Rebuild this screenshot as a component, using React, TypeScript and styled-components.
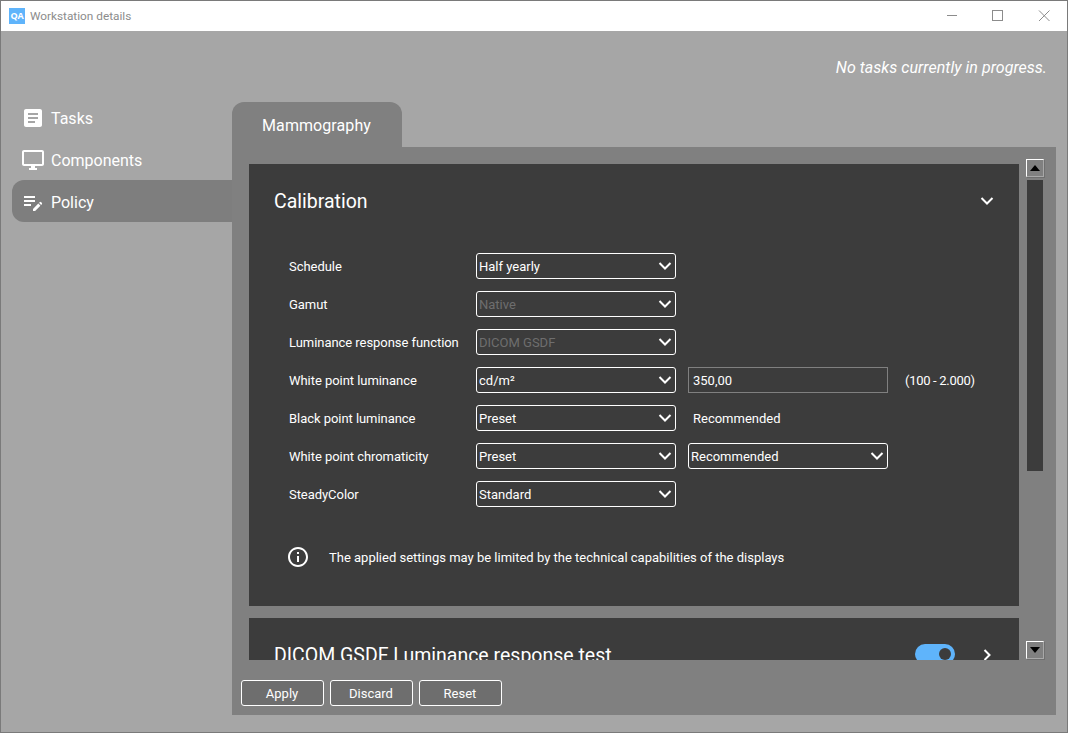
import React from "react";
import styled, { createGlobalStyle } from "styled-components";
import { MdArticle, MdOutlineDesktopWindows, MdEditNote, MdInfoOutline } from "react-icons/md";

const Global = createGlobalStyle`
  html, body { margin: 0; padding: 0; background: #a6a6a6; }
  * { box-sizing: border-box; }
`;

const Win = styled.div`
  width: 1068px; height: 733px; border: 1px solid #7a7a7a;
  display: flex; flex-direction: column; overflow: hidden;
  background: #a6a6a6; font-family: Roboto, sans-serif; color: #fff;
`;
const TitleBar = styled.div`
  height: 30px; flex: none; background: #fff; display: flex; align-items: center; padding-left: 8px;
`;
const AppIcon = styled.div`
  width: 16px; height: 16px; background: #5fb4fb; color: #fff; font: 700 9px/16px "Open Sans", sans-serif;
  text-align: center; letter-spacing: -0.2px;
`;
const AppTitle = styled.div`
  margin-left: 5px; font: 11.8px Roboto, sans-serif; color: #8c8c8c; flex: 1;
`;
const WinCtrl = styled.svg`
  width: 46px; height: 30px; flex: none; display: block;
`;
const Status = styled.div`
  height: 65px; flex: none; text-align: right; padding: 27px 20px 0 0;
  font-size: 16px; line-height: 19px; font-style: italic; letter-spacing: 0.03px;
`;
const Main = styled.div`
  flex: 1; display: flex; min-height: 0; padding-bottom: 17px;
`;
const Sidebar = styled.nav`
  width: 231px; flex: none; padding-left: 11px;
`;
const NavItem = styled.div<{ $active?: boolean }>`
  height: 42px; display: flex; align-items: center; padding: 2px 0 0 9px; gap: 6px;
  font-size: 16px; border-radius: 12px 0 0 12px;
  background: ${(p) => (p.$active ? "#7e7e7e" : "transparent")};
  svg { display: block; flex: none; }
`;
const Content = styled.div`
  width: 824px; flex: none; display: flex; flex-direction: column; padding-top: 6px;
`;
const Tab = styled.div`
  width: 170px; height: 45px; flex: none; background: #808080; border-radius: 12px 12px 0 0;
  display: flex; align-items: center; justify-content: center; font-size: 16px; padding-top: 2px;
  letter-spacing: 0.08px; padding-right: 1px;
`;
const Panel = styled.div`
  flex: 1; background: #808080; display: flex; flex-direction: column; min-height: 0;
`;
const ScrollRow = styled.div`
  height: 513px; flex: none; display: flex; overflow: hidden; padding: 17px 0 0 17px;
`;
const Cards = styled.div`
  width: 770px; flex: none; display: flex; flex-direction: column; gap: 12px;
`;
const Card = styled.section<{ $height: number }>`
  height: ${(p) => p.$height}px; flex: none; background: #3c3c3c; padding: 0 25px;
`;
const CardHead = styled.div`
  height: 74px; display: flex; align-items: center; font-size: 19.5px;
`;
const CardTitle = styled.div` flex: 1; `;
const Chevron = styled.svg`
  width: 14px; height: 14px; display: block; flex: none;
`;
const Toggle = styled.div`
  width: 40px; height: 20px; border-radius: 10px; background: #5fb4fb; margin: 0 25px 2px 0; padding: 4px 4px 4px 24px;
  &::after { content: ""; display: block; width: 12px; height: 12px; border-radius: 50%; background: #3c3c3c; }
`;
const Form = styled.div`
  display: grid; grid-template-columns: 187px 200px 212px auto; row-gap: 12px;
  padding: 15px 0 0 15px; font-size: 13px; align-items: center;
  grid-auto-rows: 26px;
`;
const Label = styled.div` grid-column: 1; letter-spacing: -0.05px; `;
const Sel = styled.div<{ $disabled?: boolean; $col2?: boolean }>`
  height: 26px; width: 200px; border: 1px solid #fff; border-radius: 3px; display: flex; align-items: center;
  padding: 0 3px 0 2px; justify-content: space-between;
  color: ${(p) => (p.$disabled ? "#6e6e6e" : "#fff")};
  margin-left: ${(p) => (p.$col2 ? "12px" : "0")};
  svg { display: block; }
`;
const Input = styled.div`
  height: 26px; width: 200px; margin-left: 12px; border: 1px solid #808080; display: flex; align-items: center; padding-left: 4px;
`;
const PlainValue = styled.div` margin-left: 17px; `;
const Range = styled.div` margin-left: 17px; white-space: nowrap; letter-spacing: -0.3px; `;
const Note = styled.div`
  display: flex; align-items: center; margin: 38px 0 0 12px; font-size: 13px; height: 24px;
  svg { display: block; flex: none; margin-right: 19px; }
`;
const ScrollBar = styled.div`
  width: 18px; flex: none; margin: -5px 0 0 7px; display: flex; flex-direction: column; align-items: center; height: 500px;
`;
const ScrollBtn = styled.div`
  width: 18px; height: 18px; flex: none; background: #808080; border: 1px solid; border-color: #fff #a8a8a8 #a8a8a8 #fff;
  box-shadow: 1px 1px 0 #6f6f6f; display: flex; align-items: center; justify-content: center;
  svg { display: block; }
`;
const Track = styled.div`
  width: 16px; height: 291px; flex: none; background: #3c3c3c; margin-top: 3px;
`;
const TrackGap = styled.div` flex: 1; `;
const Footer = styled.div`
  flex: 1; display: flex; gap: 6px; padding: 20px 0 0 9px;
`;
const Btn = styled.div`
  width: 83px; height: 26px; border: 1px solid #fff; border-radius: 3px; background: #6e6e6e;
  display: flex; align-items: center; justify-content: center; font-size: 13px; padding-right: 1px;
`;

const Down = ({ size = 14 }: { size?: number }) => (
  <Chevron viewBox="0 0 14 14" style={{ width: size, height: size }}>
    <polyline points="1.5,4 7,9.5 12.5,4" fill="none" stroke="#fff" strokeWidth="2" />
  </Chevron>
);

const rows: { label: string; cells: React.ReactNode }[] = [
  { label: "Schedule", cells: <Sel>Half yearly<Down /></Sel> },
  { label: "Gamut", cells: <Sel $disabled>Native<Down /></Sel> },
  { label: "Luminance response function", cells: <Sel $disabled>DICOM GSDF<Down /></Sel> },
  {
    label: "White point luminance",
    cells: (
      <>
        <Sel>cd/m²<Down /></Sel>
        <Input>350,00</Input>
        <Range>(100 - 2.000)</Range>
      </>
    ),
  },
  {
    label: "Black point luminance",
    cells: (
      <>
        <Sel>Preset<Down /></Sel>
        <PlainValue>Recommended</PlainValue>
      </>
    ),
  },
  {
    label: "White point chromaticity",
    cells: (
      <>
        <Sel>Preset<Down /></Sel>
        <Sel $col2>Recommended<Down /></Sel>
      </>
    ),
  },
  { label: "SteadyColor", cells: <Sel>Standard<Down /></Sel> },
];

export default function App() {
  return (
    <Win>
      <Global />
      <TitleBar>
        <AppIcon>QA</AppIcon>
        <AppTitle>Workstation details</AppTitle>
        <WinCtrl viewBox="0 0 46 30">
          <line x1="18" y1="14.5" x2="28" y2="14.5" stroke="#8c8c8c" />
        </WinCtrl>
        <WinCtrl viewBox="0 0 46 30">
          <rect x="17.5" y="9.5" width="10" height="10" fill="none" stroke="#8c8c8c" />
        </WinCtrl>
        <WinCtrl viewBox="0 0 46 30">
          <path d="M18 9.5l10.5 10.5M28.5 9.5L18 20" fill="none" stroke="#8c8c8c" />
        </WinCtrl>
      </TitleBar>
      <Status>No tasks currently in progress.</Status>
      <Main>
        <Sidebar>
          <NavItem><MdArticle size={24} />Tasks</NavItem>
          <NavItem><MdOutlineDesktopWindows size={24} />Components</NavItem>
          <NavItem $active><MdEditNote size={24} />Policy</NavItem>
        </Sidebar>
        <Content>
          <Tab>Mammography</Tab>
          <Panel>
            <ScrollRow>
              <Cards>
                <Card $height={442}>
                  <CardHead>
                    <CardTitle>Calibration</CardTitle>
                    <Down />
                  </CardHead>
                  <Form>
                    {rows.map((r) => (
                      <React.Fragment key={r.label}>
                        <Label>{r.label}</Label>
                        {r.cells}
                      </React.Fragment>
                    ))}
                  </Form>
                  <Note>
                    <MdInfoOutline size={24} />
                    The applied settings may be limited by the technical capabilities of the displays
                  </Note>
                </Card>
                <Card $height={74}>
                  <CardHead>
                    <CardTitle>DICOM GSDF Luminance response test</CardTitle>
                    <Toggle />
                    <Chevron viewBox="0 0 14 14">
                      <polyline points="4.5,2 9.5,7 4.5,12" fill="none" stroke="#fff" strokeWidth="2" />
                    </Chevron>
                  </CardHead>
                </Card>
              </Cards>
              <ScrollBar>
                <ScrollBtn>
                  <svg width="10" height="6" viewBox="0 0 10 6"><path d="M5 0l5 6H0z" fill="#000" /></svg>
                </ScrollBtn>
                <Track />
                <TrackGap />
                <ScrollBtn>
                  <svg width="10" height="6" viewBox="0 0 10 6"><path d="M0 0h10L5 6z" fill="#000" /></svg>
                </ScrollBtn>
              </ScrollBar>
            </ScrollRow>
            <Footer>
              <Btn>Apply</Btn>
              <Btn>Discard</Btn>
              <Btn>Reset</Btn>
            </Footer>
          </Panel>
        </Content>
      </Main>
    </Win>
  );
}
